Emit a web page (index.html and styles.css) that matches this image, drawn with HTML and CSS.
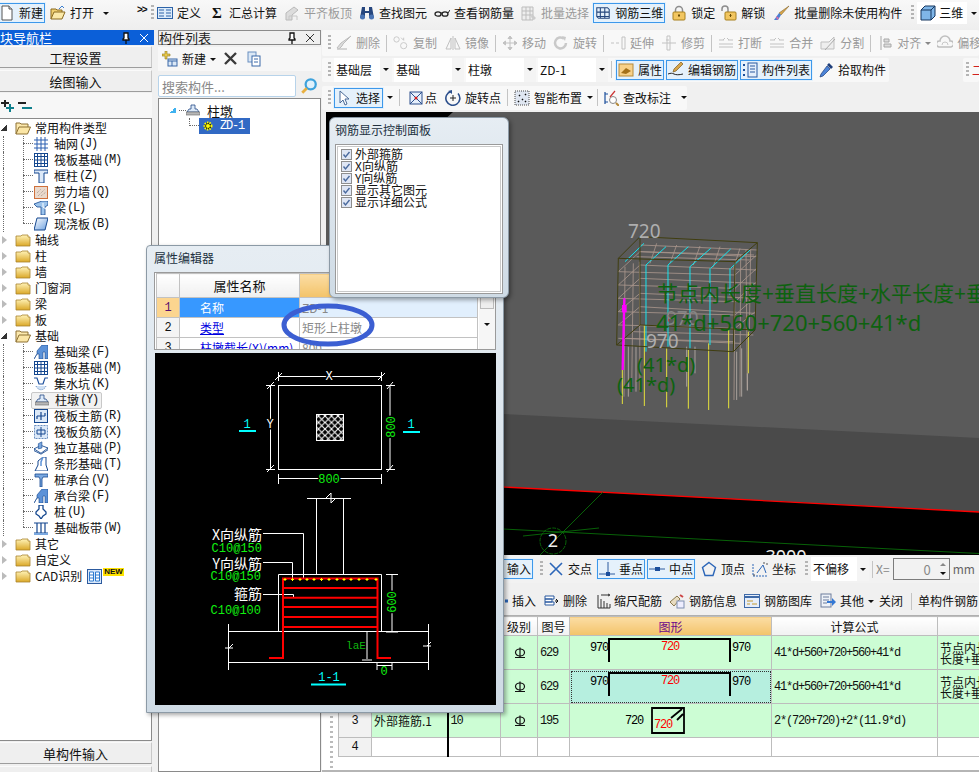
FILE: index.html
```html
<!DOCTYPE html>
<html lang="zh-CN">
<head>
<meta charset="UTF-8">
<title>钢筋三维</title>
<link rel="stylesheet" href="styles.css">
</head>
<body>
<svg class="sprite" xmlns="http://www.w3.org/2000/svg">
  <symbol id="i-doc" viewBox="0 0 16 16"><path d="M3 1h7l3 3v11H3z" fill="#fff" stroke="#555"/><path d="M10 1v3h3" fill="#ddd" stroke="#555"/></symbol>
  <symbol id="i-open" viewBox="0 0 16 16"><path d="M1 14V4h5l1 1h5v3" fill="#f0cf70" stroke="#8a6a20"/><path d="M1 14l3-7h11l-3 7z" fill="#fbe9a8" stroke="#8a6a20"/><path d="M9 4l3-3 2 2" fill="none" stroke="#3c7fd0"/></symbol>
  <symbol id="i-folder" viewBox="0 0 16 14"><path d="M1 3h5l1-1h6v2h2v9H1z" fill="url(#g-fold)" stroke="#a8842e" stroke-width=".8"/></symbol>
  <symbol id="i-folder-open" viewBox="0 0 16 14"><path d="M1 13V2h4l1 1h7v3" fill="#fce9ae" stroke="#8d7033"/><path d="M1 13l3-7h11.500l-3 7z" fill="#fbe6a6" stroke="#8d7033"/></symbol>
  <linearGradient id="g-fold" x1="0" y1="0" x2="0" y2="1"><stop offset="0" stop-color="#fff3b8"/><stop offset="1" stop-color="#dba828"/></linearGradient>
  <symbol id="i-define" viewBox="0 0 16 16"><rect x=".5" y="2.500" width="15" height="11" fill="#dcebfa" stroke="#2d63a8"/><path d="M2 5h5M9 5h5M9 8h5M9 11h5M2 8h5M2 11h5" stroke="#2d63a8"/></symbol>
  <symbol id="i-sum" viewBox="0 0 13 16"><text x="0" y="13" font-family="Liberation Serif" font-size="15" font-weight="700" fill="#111">Σ</text></symbol>
  <symbol id="i-level" viewBox="0 0 16 16"><path d="M2 15V8l8-6 4 3-6 5v5z" fill="#dcdcdc" stroke="#b9b9b9"/><path d="M5 15v-4h8v4" fill="none" stroke="#c6c6c6"/></symbol>
  <symbol id="i-binoc" viewBox="0 0 16 16"><path d="M3 2h3v4h4V2h3l2 11h-5V8H6v5H1z" fill="#26467e"/><circle cx="3.500" cy="12" r="2.500" fill="#4a74b4"/><circle cx="12.500" cy="12" r="2.500" fill="#4a74b4"/></symbol>
  <symbol id="i-glass" viewBox="0 0 16 16"><ellipse cx="4" cy="9" rx="3" ry="2.200" fill="none" stroke="#222" stroke-width="1.300"/><ellipse cx="11" cy="9" rx="3" ry="2.200" fill="none" stroke="#222" stroke-width="1.300"/><path d="M7 8h1M14 8l2-3" stroke="#222"/></symbol>
  <symbol id="i-batch" viewBox="0 0 16 16"><path d="M1 2h11v13H1zM1 6h11M1 10h11M5 2v13M9 2v13" fill="#eee" stroke="#bdbdbd"/><path d="M11 9l4 4-2 2-3-3z" fill="#ccc"/></symbol>
  <symbol id="i-rebar3d" viewBox="0 0 16 18"><path d="M1 3h12l2 2v10H3l-2-2zM1 8h14M5 3v12M10 3v12M1 13h14" fill="none" stroke="#24467c" stroke-width="1.200"/></symbol>
  <symbol id="i-lock" viewBox="0 0 14 16"><path d="M3.500 8V5a3.500 3.500 0 0 1 7 0v3" fill="none" stroke="#8d8d8d" stroke-width="1.500"/><rect x="1" y="7" width="12" height="8" rx="1" fill="#f2c660" stroke="#a8801c"/><path d="M7 9v3M6 10.500h2" stroke="#6a4d05"/></symbol>
  <symbol id="i-unlock" viewBox="0 0 16 16"><path d="M1 6V4a3 3 0 0 1 6 0v3" fill="none" stroke="#8d8d8d" stroke-width="1.500"/><rect x="4" y="7" width="11" height="8" rx="1" fill="#f2c660" stroke="#a8801c"/><path d="M9.500 9v3M8.500 10.500h2" stroke="#6a4d05"/></symbol>
  <symbol id="i-brush" viewBox="0 0 16 16"><path d="M15 1L7 10l-2-2z" fill="#d8a64a" stroke="#86672c" stroke-width=".6"/><path d="M5 8l2 2-3 5H0z" fill="#4a80d4"/><path d="M2 11l3 2-2 2" fill="#e26ca4"/></symbol>
  <symbol id="i-cube" viewBox="0 0 16 16"><path d="M1 5l4-4h10v10l-4 4H1z" fill="#7fb6e8" stroke="#17375f"/><path d="M1 5h10v10M11 5l4-4" fill="none" stroke="#17375f"/></symbol>
  <symbol id="i-erase" viewBox="0 0 16 16"><path d="M15 1L7 9l-1 2-3 3-2-1 4-5z" fill="#dcdcdc" stroke="#bcbcbc"/><path d="M1 14h10" stroke="#c9c9c9" stroke-width="1.500"/></symbol>
  <symbol id="i-copy" viewBox="0 0 18 16"><circle cx="4" cy="4" r="3" fill="none" stroke="#c4c4c4"/><circle cx="12" cy="11" r="3.500" fill="none" stroke="#c4c4c4"/><path d="M9 2l3 3M12 2v3" stroke="#c4c4c4"/></symbol>
  <symbol id="i-mirror" viewBox="0 0 16 16"><path d="M8 1v14M6 3L1 14h5zM10 3l5 11h-5z" fill="none" stroke="#c0c0c0"/></symbol>
  <symbol id="i-move" viewBox="0 0 16 16"><path d="M8 1v14M1 8h14M8 1L6 3.500h4zM8 15l-2-2.500h4zM1 8l2.500-2v4zM15 8l-2.500-2v4z" fill="#c2c2c2" stroke="#c2c2c2"/></symbol>
  <symbol id="i-rotate" viewBox="0 0 16 16"><path d="M13 8a5.500 5.500 0 1 1-2-4.300" fill="none" stroke="#c9c9c9" stroke-width="2.500"/><path d="M9 1l4 1-1 4z" fill="#c9c9c9"/></symbol>
  <symbol id="i-extend" viewBox="0 0 16 16"><path d="M1 8h3M6 8h3" stroke="#c2c2c2"/><path d="M12 2h3v12h-3z" fill="none" stroke="#c2c2c2"/></symbol>
  <symbol id="i-trim" viewBox="0 0 16 16"><path d="M1 8h14M5 5h3M6 1h3v14H6z" fill="none" stroke="#c2c2c2"/></symbol>
  <symbol id="i-break" viewBox="0 0 16 16"><path d="M1 5h5M10 5h5M1 12h14M1 9h14M5 5l2-2M11 5L9 3" fill="none" stroke="#c2c2c2"/></symbol>
  <symbol id="i-split" viewBox="0 0 16 16"><path d="M1 14V7h8l5-5v12z" fill="#eee" stroke="#bfbfbf"/><path d="M5 15l10-11" stroke="#aaa"/></symbol>
  <symbol id="i-align" viewBox="0 0 12 16"><path d="M2 1v14M5 4h5v3H5zM5 9h7v3H5z" fill="#ddd" stroke="#a8a8a8"/></symbol>
  <symbol id="i-offset" viewBox="0 0 16 16"><path d="M2 12a3 3 0 0 1 1-6 5 5 0 0 1 10 0 3 3 0 0 1 1 6z" fill="none" stroke="#bfbfbf" stroke-width="1.500"/><path d="M5 10a3 3 0 0 1 6 0" fill="none" stroke="#c8c8c8"/></symbol>
  <symbol id="i-attr" viewBox="0 0 16 16"><rect x="1" y="2" width="14" height="12" fill="#f8d189" stroke="#b58a3a"/><path d="M3 11l5-5 5 3-5 3z" fill="#a47018"/></symbol>
  <symbol id="i-pencil" viewBox="0 0 16 16"><path d="M15 2l-7 7-3 1 1-3 7-7z" fill="#d8a64a" stroke="#7c5c1e" stroke-width=".7"/><path d="M0 12c3-1 4-1 6 0s5 1 9 0" fill="none" stroke="#222"/></symbol>
  <symbol id="i-list" viewBox="0 0 16 16"><path d="M1 2h2v2H1zM1 7h2v2H1zM1 12h2v2H1z" fill="#1c4f9c"/><rect x="6" y="1" width="9" height="14" fill="#e4eefa" stroke="#28589f"/><path d="M8 4h5M8 7h5M8 10h5" stroke="#28589f"/></symbol>
  <symbol id="i-pick" viewBox="0 0 16 16"><path d="M11 1l4 4-2 2-4-4z" fill="#1f3f7a"/><path d="M9 4l3 3-7 7-3 1 1-3z" fill="#4c84d8" stroke="#1f3f7a" stroke-width=".7"/></symbol>
  <symbol id="i-cursor" viewBox="0 0 12 16"><path d="M2 1v12l3-3 2 5 2-1-2-5h4z" fill="#fff" stroke="#4b6b98"/></symbol>
  <symbol id="i-point" viewBox="0 0 16 16"><rect x="2" y="2" width="12" height="12" fill="#e6effb" stroke="#2c4f8c"/><path d="M2 2l12 12M14 2L2 14" stroke="#2c4f8c"/><circle cx="8" cy="8" r="1.500" fill="#d02020"/></symbol>
  <symbol id="i-rotpt" viewBox="0 0 16 16"><path d="M13 3.500A7 7 0 1 1 6 1.500" fill="none" stroke="#2c4f8c" stroke-width="1.600"/><path d="M3 1l4-1v4z" fill="#2c4f8c"/><path d="M8 5v6M5 8h6" stroke="#222"/></symbol>
  <symbol id="i-smart" viewBox="0 0 16 16"><rect x="1" y="1" width="14" height="14" fill="#dfe6f1" stroke="#4a4a4a" stroke-dasharray="1 1"/><path d="M5 5l1 1M11 4l1 1M8 9l1 1M4 11l1 1M11 11l1 1" stroke="#111" stroke-width="1.500"/></symbol>
  <symbol id="i-query" viewBox="0 0 16 16"><path d="M2 2v12M2 4h3M2 12h3" stroke="#1c4f9c" stroke-width="1.200"/><circle cx="10" cy="10" r="3.500" fill="#fff" stroke="#888"/><path d="M13 13l3 3" stroke="#b58a3a" stroke-width="2"/><path d="M7 7l5-6" stroke="#c33" stroke-width="1.200"/></symbol>
  <symbol id="i-cross" viewBox="0 0 16 16"><path d="M2 2l12 12M14 2L2 14" stroke="#2c66b8" stroke-width="1.600"/></symbol>
  <symbol id="i-perp" viewBox="0 0 16 16"><path d="M0 13h16M9 1v12" stroke="#2c5a9e"/><rect x="7" y="11" width="4" height="4" fill="#1c4f9c"/></symbol>
  <symbol id="i-mid" viewBox="0 0 16 16"><path d="M0 8h16" stroke="#2c5a9e"/><rect x="6" y="6" width="5" height="4" fill="#1c4f9c"/></symbol>
  <symbol id="i-vertex" viewBox="0 0 16 16"><path d="M8 1.500l6.500 5-2.500 8H4l-2.500-8z" fill="none" stroke="#2c66b8" stroke-width="1.400"/></symbol>
  <symbol id="i-coord" viewBox="0 0 16 16"><path d="M1 3v12h14" fill="none" stroke="#2c66b8" stroke-dasharray="2 1"/><path d="M5 12l6-8 3 8" fill="none" stroke="#2c66b8"/><path d="M11 2h2M1 14h2M14 3h2" stroke="#555"/></symbol>
  <symbol id="i-insert" viewBox="0 0 16 16"><path d="M13 8h3" stroke="#2c66b8" stroke-width="3"/></symbol>
  <symbol id="i-del" viewBox="0 0 16 16"><path d="M2 3h9v3H2zM2 6h7v3H2zM2 9h9v3H2z" fill="#fff" stroke="#28589f"/><path d="M12 8h3M13 6l2 2-2 2" fill="none" stroke="#111"/></symbol>
  <symbol id="i-shrink" viewBox="0 0 14 16"><path d="M1 2v13M1 15h12M4 6v9M7 8v7M10 10v5M13 11v4M4 2h8M11 1l2 1-2 1" fill="none" stroke="#333"/></symbol>
  <symbol id="i-info" viewBox="0 0 16 16"><path d="M1 9l7-6 3 3-6 7z" fill="#e8dcc0" stroke="#8a7a50"/><rect x="8" y="8" width="7" height="7" fill="#eef" stroke="#7f8fb0"/><path d="M11 2l3 2" stroke="#c44" stroke-width="2"/></symbol>
  <symbol id="i-lib" viewBox="0 0 16 16"><rect x=".5" y="1.500" width="15" height="13" fill="#e6eefa" stroke="#3f6aa8"/><path d="M1 4h14" stroke="#3f6aa8" stroke-width="2"/><path d="M3 8h6M3 11h3M8 11h5" stroke="#c49a30"/></symbol>
  <symbol id="i-other" viewBox="0 0 16 16"><rect x="1" y="1" width="10" height="13" fill="#eef2f8" stroke="#6c7d9c"/><path d="M3 4h6M3 7h6M3 10h4" stroke="#6c7d9c"/><path d="M7 8h5V5l4 4-4 4v-3H7z" fill="#3478d4"/></symbol>
  <symbol id="i-new" viewBox="0 0 16 16"><path d="M3 0h2v3h3v2H5v3H3V5H0V3h3z" fill="#e8c84a" stroke="#8f7a20" stroke-width=".6"/><rect x="6" y="8" width="9" height="7" fill="#dbe8f6" stroke="#3a69a8"/><path d="M6 10h9M10 10v5" stroke="#3a69a8"/></symbol>
  <symbol id="i-x" viewBox="0 0 16 16"><path d="M2 2l11 11M13 2L2 13" stroke="#3a3a3a" stroke-width="2.400"/></symbol>
  <symbol id="i-paste" viewBox="0 0 16 16"><rect x="2" y="1" width="8" height="10" fill="#dbe8f6" stroke="#6a8fc0"/><rect x="6" y="5" width="8" height="10" fill="#fff" stroke="#3a69a8"/><path d="M8 8h4M8 11h4" stroke="#3a69a8"/></symbol>
  <symbol id="i-search" viewBox="0 0 16 16"><circle cx="9.500" cy="6.500" r="4.500" fill="#dff1fc" stroke="#3da2dc" stroke-width="2"/><path d="M6 10l-4 4" stroke="#e8b040" stroke-width="2.500"/></symbol>
  <symbol id="i-pin" viewBox="0 0 10 12"><path d="M3 1h4v5l1 1v1H2V7l1-1zM5 8v4" fill="#fff" stroke="#111" stroke-width="1.300"/></symbol>
  <symbol id="i-close" viewBox="0 0 10 10"><path d="M1 1l8 8M9 1L1 9" stroke="currentColor"/></symbol>
  <symbol id="i-plus" viewBox="0 0 14 14"><path d="M5 1v7M1 4h8" stroke="#222" stroke-width="2"/><path d="M10 5v8M6 9h8" stroke="#0f7f8c" stroke-width="2"/></symbol>
  <symbol id="i-minus" viewBox="0 0 14 14"><path d="M0 4h8" stroke="#222" stroke-width="2"/><path d="M4 9h10" stroke="#0f7f8c" stroke-width="2"/></symbol>
  <symbol id="i-grade" viewBox="0 0 12 12"><ellipse cx="6" cy="5.500" rx="4.500" ry="3.500" fill="none" stroke="#111" stroke-width="1.200"/><path d="M6 .5v10M1 10.500h10" stroke="#111" stroke-width="1.200"/></symbol>
  <symbol id="t-grid" viewBox="0 0 14 14"><path d="M0 3h14M0 7h14M0 11h14M3 0v14M7 0v14M11 0v14" stroke="#2a5fb0"/></symbol>
  <symbol id="t-raft" viewBox="0 0 14 14"><rect x=".5" y=".5" width="13" height="13" fill="#fff" stroke="#14478f"/><path d="M0 3.500h14M0 10.500h14M3.500 0v14M10.500 0v14M0 7h14M7 0v14" stroke="#14478f"/></symbol>
  <symbol id="t-col" viewBox="0 0 14 14"><path d="M0 1h14v3H10v10H5V4H0z" fill="#dce9f8" stroke="#14478f"/></symbol>
  <symbol id="t-wall" viewBox="0 0 14 14"><rect x=".5" y="1.500" width="13" height="12" fill="#ead9cc" stroke="#d0703a"/><path d="M4 11l7-7M3 8l4-4M7 11l5-4" stroke="#a89a90" stroke-dasharray="1 1"/></symbol>
  <symbol id="t-beam" viewBox="0 0 14 14"><path d="M0 3l8-3h6v4l-3 2v8H7V6H3z" fill="#9cc4ec" stroke="#14478f" stroke-width=".8"/><path d="M9 2v4l3 2" fill="none" stroke="#fff"/></symbol>
  <symbol id="t-slab" viewBox="0 0 14 14"><path d="M3 1h11l-3 12H0z" fill="url(#g-slab)" stroke="#14478f"/></symbol>
  <linearGradient id="g-slab" x1="0" y1="0" x2="1" y2="1"><stop offset="0" stop-color="#fff"/><stop offset="1" stop-color="#6ca0e0"/></linearGradient>
  <symbol id="t-fbeam" viewBox="0 0 14 14"><path d="M0 14l3-5V6l5-6h6v14h-3V7L9 7v7H5V9H3z" fill="#5c92d8" stroke="#14478f" stroke-width=".6"/></symbol>
  <symbol id="t-pit" viewBox="0 0 14 14"><path d="M0 1h3l2 6h4l2-6h3" fill="none" stroke="#1c4f9c" stroke-width="1.200"/><path d="M2 9c2 5 8 5 10 0" fill="#cfe0f4" stroke="#6a8fc0" stroke-dasharray="1 1"/></symbol>
  <symbol id="t-pier" viewBox="0 0 14 14"><path d="M5 2h4v4h2l2 3H1l2-3h2z" fill="#dce9f8" stroke="#234a86" stroke-width=".8"/><rect x="0" y="9" width="14" height="3" fill="#b7b7b7" stroke="#666" stroke-width=".6"/></symbol>
  <symbol id="t-main" viewBox="0 0 14 14"><rect x=".5" y=".5" width="13" height="13" fill="#dce9f8" stroke="#14478f"/><path d="M7 3v8M3 7h8M3 7v3M11 7v-3" fill="none" stroke="#14478f" stroke-width="1.200"/></symbol>
  <symbol id="t-neg" viewBox="0 0 14 14"><rect x=".5" y=".5" width="13" height="13" fill="#dce9f8" stroke="#6a8fc0" stroke-dasharray="2 1"/><path d="M7 2v10M3 5h8M3 9h8M3 5v4M11 5v4" fill="none" stroke="#14478f"/></symbol>
  <symbol id="t-iso" viewBox="0 0 16 14"><path d="M0 8l8-4 8 3-8 6z" fill="#fff" stroke="#14478f"/><path d="M5 2l4-2v7l-4 1z" fill="#7aa8e0" stroke="#14478f" stroke-width=".7"/><path d="M0 8v2l8 4 8-5V7" fill="none" stroke="#14478f"/></symbol>
  <symbol id="t-strip" viewBox="0 0 14 14"><path d="M1 14l3-6V4l5-4h3v8l2 6z" fill="#fff" stroke="#14478f"/><path d="M9 0l-2 5v4" fill="none" stroke="#5c92d8" stroke-width="1.500"/></symbol>
  <symbol id="t-cap" viewBox="0 0 14 14"><path d="M1 1h13v3H9l-1 2v8H6V6L5 4H1z" fill="#7aa8e0" stroke="#14478f" stroke-width=".8"/></symbol>
  <symbol id="t-pile" viewBox="0 0 14 14"><path d="M5 0h4v4l3 3v2l-3 2-2 3-2-3-3-2V7l3-3z" fill="#fff" stroke="#14478f" stroke-width="1.300"/></symbol>
  <symbol id="t-band" viewBox="0 0 14 14"><path d="M0 2h14M0 12h14M3 2v10M7 2v10M11 2v10" stroke="#14478f" stroke-width="1.200"/><path d="M0 13h14" stroke="#7aa8e0" stroke-width="2"/></symbol>
  <symbol id="i-check" viewBox="0 0 11 11"><rect x=".5" y=".5" width="10" height="10" fill="#dfe6f4" stroke="#8e8e8e"/><path d="M2.500 5.500l2 2.500 4-5" fill="none" stroke="#4a6a9e" stroke-width="1.400"/></symbol>
</svg>

<div class="app">
  <header class="topbar">
    <div class="tool on first"><svg class="ico"><use href="#i-doc"/></svg>新建</div>
    <div class="tool m1"><svg class="ico"><use href="#i-open"/></svg>打开</div>
    <span class="caret m6"></span>
    <span class="chev">&gt;&gt;</span>
    <span class="grip gripm"></span>
    <div class="tool"><svg class="ico"><use href="#i-define"/></svg>定义</div>
    <div class="tool m5"><svg class="ico sum"><use href="#i-sum"/></svg>汇总计算</div>
    <div class="tool off m1"><svg class="ico"><use href="#i-level"/></svg>平齐板顶</div>
    <div class="tool m1"><svg class="ico"><use href="#i-binoc"/></svg>查找图元</div>
    <div class="tool m1"><svg class="ico"><use href="#i-glass"/></svg>查看钢筋量</div>
    <div class="tool off m1"><svg class="ico"><use href="#i-batch"/></svg>批量选择</div>
    <div class="tool on"><svg class="ico"><use href="#i-rebar3d"/></svg>钢筋三维</div>
    <div class="tool m2"><svg class="ico"><use href="#i-lock"/></svg>锁定</div>
    <div class="tool"><svg class="ico"><use href="#i-unlock"/></svg>解锁</div>
    <div class="tool m3"><svg class="ico"><use href="#i-brush"/></svg>批量删除未使用构件</div>
    <span class="grip gripw"></span>
    <div class="combo view"><svg class="ico"><use href="#i-cube"/></svg>三维</div>
    <span class="caret m4"></span>
  </header>

  <div class="main">
    <aside class="nav">
      <div class="pane-title active"><span>块导航栏</span><svg class="pin"><use href="#i-pin"/></svg><svg class="closex"><use href="#i-close"/></svg></div>
      <div class="nav-btn">工程设置</div>
      <div class="nav-btn">绘图输入</div>
      <div class="nav-tools"><svg class="ico14"><use href="#i-plus"/></svg><svg class="ico14"><use href="#i-minus"/></svg></div>
      <div class="tree">
        <div class="folder"><span class="exp open"></span><svg class="fold"><use href="#i-folder-open"/></svg>常用构件类型</div>
        <div class="kid"><span class="stub"></span><svg class="ti"><use href="#t-grid"/></svg>轴网<em>(J)</em></div>
        <div class="kid"><span class="stub"></span><svg class="ti"><use href="#t-raft"/></svg>筏板基础<em>(M)</em></div>
        <div class="kid"><span class="stub"></span><svg class="ti"><use href="#t-col"/></svg>框柱<em>(Z)</em></div>
        <div class="kid"><span class="stub"></span><svg class="ti"><use href="#t-wall"/></svg>剪力墙<em>(Q)</em></div>
        <div class="kid"><span class="stub"></span><svg class="ti"><use href="#t-beam"/></svg>梁<em>(L)</em></div>
        <div class="kid end"><span class="stub"></span><svg class="ti"><use href="#t-slab"/></svg>现浇板<em>(B)</em></div>
        <div class="folder"><span class="exp"></span><svg class="fold"><use href="#i-folder"/></svg>轴线</div>
        <div class="folder"><span class="exp"></span><svg class="fold"><use href="#i-folder"/></svg>柱</div>
        <div class="folder"><span class="exp"></span><svg class="fold"><use href="#i-folder"/></svg>墙</div>
        <div class="folder"><span class="exp"></span><svg class="fold"><use href="#i-folder"/></svg>门窗洞</div>
        <div class="folder"><span class="exp"></span><svg class="fold"><use href="#i-folder"/></svg>梁</div>
        <div class="folder"><span class="exp"></span><svg class="fold"><use href="#i-folder"/></svg>板</div>
        <div class="folder"><span class="exp open"></span><svg class="fold"><use href="#i-folder-open"/></svg>基础</div>
        <div class="kid"><span class="stub"></span><svg class="ti"><use href="#t-fbeam"/></svg>基础梁<em>(F)</em></div>
        <div class="kid"><span class="stub"></span><svg class="ti"><use href="#t-raft"/></svg>筏板基础<em>(M)</em></div>
        <div class="kid"><span class="stub"></span><svg class="ti"><use href="#t-pit"/></svg>集水坑<em>(K)</em></div>
        <div class="kid"><span class="stub"></span><span class="hover"><svg class="ti"><use href="#t-pier"/></svg>柱墩<em>(Y)</em></span></div>
        <div class="kid"><span class="stub"></span><svg class="ti"><use href="#t-main"/></svg>筏板主筋<em>(R)</em></div>
        <div class="kid"><span class="stub"></span><svg class="ti"><use href="#t-neg"/></svg>筏板负筋<em>(X)</em></div>
        <div class="kid"><span class="stub"></span><svg class="ti"><use href="#t-iso"/></svg>独立基础<em>(P)</em></div>
        <div class="kid"><span class="stub"></span><svg class="ti"><use href="#t-strip"/></svg>条形基础<em>(T)</em></div>
        <div class="kid"><span class="stub"></span><svg class="ti"><use href="#t-cap"/></svg>桩承台<em>(V)</em></div>
        <div class="kid"><span class="stub"></span><svg class="ti"><use href="#t-fbeam"/></svg>承台梁<em>(F)</em></div>
        <div class="kid"><span class="stub"></span><svg class="ti"><use href="#t-pile"/></svg>桩<em>(U)</em></div>
        <div class="kid end"><span class="stub"></span><svg class="ti"><use href="#t-band"/></svg>基础板带<em>(W)</em></div>
        <div class="folder"><span class="exp"></span><svg class="fold"><use href="#i-folder"/></svg>其它</div>
        <div class="folder"><span class="exp"></span><svg class="fold"><use href="#i-folder"/></svg>自定义</div>
        <div class="folder"><span class="exp"></span><svg class="fold"><use href="#i-folder"/></svg><span class="cad-name">CAD识别</span>
          <svg class="cad-ico" viewBox="0 0 15 15"><rect x=".5" y=".5" width="14" height="14" fill="#d9e8fa" stroke="#2c5a9e"/><path d="M2.500 3h4v9h-4zM8.500 3h4v9h-4zM2.500 6h4M2.500 9h4M8.500 6h4M8.500 9h4" fill="#fff" stroke="#2c7bd0"/></svg><span class="newtag">NEW</span></div>
      </div>
      <div class="nav-btn">单构件输入</div>
      <div class="nav-btn">报表预览</div>
    </aside>

    <section class="list-pane">
      <div class="pane-title"><span>构件列表</span><svg class="pin"><use href="#i-pin"/></svg><svg class="closex"><use href="#i-close"/></svg></div>
      <div class="list-tools">
        <svg class="ico"><use href="#i-new"/></svg><span>新建</span><span class="caret"></span>
        <svg class="ico del"><use href="#i-x"/></svg><svg class="ico"><use href="#i-paste"/></svg>
      </div>
      <div class="search"><span class="search-box">搜索构件...</span><svg class="ico18"><use href="#i-search"/></svg></div>
      <div class="list-tree">
        <div class="root"><span class="exp-blue"></span><span class="hdash"></span><svg class="ti"><use href="#t-pier"/></svg>柱墩</div>
        <div class="leaf"><span class="stub"></span><span class="picked"><svg class="gear" viewBox="0 0 12 12"><circle cx="6" cy="6" r="3.500" fill="#111" stroke="#ff0" stroke-width="2" stroke-dasharray="1.500 1"/><circle cx="6" cy="6" r="2" fill="#ff0"/></svg><i>ZD-1</i></span></div>
      </div>
    </section>

    <section class="work">
      <div class="tb wide">
        <span class="grip"></span>
        <div class="tool off m2"><svg class="ico"><use href="#i-erase"/></svg>删除</div><span class="sep"></span>
        <div class="tool off"><svg class="ico"><use href="#i-copy"/></svg>复制</div>
        <div class="tool off m2"><svg class="ico"><use href="#i-mirror"/></svg>镜像</div><span class="sep"></span>
        <div class="tool off"><svg class="ico"><use href="#i-move"/></svg>移动</div>
        <div class="tool off m1"><svg class="ico"><use href="#i-rotate"/></svg>旋转</div><span class="sep"></span>
        <div class="tool off"><svg class="ico"><use href="#i-extend"/></svg>延伸</div>
        <div class="tool off m1"><svg class="ico"><use href="#i-trim"/></svg>修剪</div><span class="sep"></span>
        <div class="tool off"><svg class="ico"><use href="#i-break"/></svg>打断</div>
        <div class="tool off m1"><svg class="ico"><use href="#i-break"/></svg>合并</div>
        <div class="tool off m1"><svg class="ico"><use href="#i-split"/></svg>分割</div><span class="sep"></span>
        <div class="tool off"><svg class="ico"><use href="#i-align"/></svg>对齐</div><span class="caret gray"></span>
        <div class="tool off m3"><svg class="ico"><use href="#i-offset"/></svg>偏移</div>
      </div>

      <div class="tb-row">
        <div class="tb">
          <span class="grip"></span>
          <div class="combo w58 m2">基础层<b><span class="caret"></span></b></div>
          <div class="combo w70 m2">基础<b><span class="caret"></span></b></div>
          <div class="combo w70 m2">柱墩<b><span class="caret"></span></b></div>
          <div class="combo w70 m2">ZD-1<b><span class="caret"></span></b></div>
          <span class="sep"></span>
          <div class="tool on"><svg class="ico"><use href="#i-attr"/></svg>属性</div>
          <div class="tool on"><svg class="ico"><use href="#i-pencil"/></svg>编辑钢筋</div>
          <div class="tool on"><svg class="ico"><use href="#i-list"/></svg>构件列表</div>
          <div class="tool m2"><svg class="ico"><use href="#i-pick"/></svg>拾取构件</div>
        </div>
        <div class="tb tail"><span class="grip"></span><span class="red-frag">二</span></div>
      </div>

      <div class="tb-row last">
        <div class="tb">
          <span class="grip"></span>
          <div class="tool on sel"><svg class="ico12"><use href="#i-cursor"/></svg>选择</div><span class="caret m3"></span><span class="sep w8"></span>
          <div class="tool tight"><svg class="ico"><use href="#i-point"/></svg>点</div>
          <div class="tool m2"><svg class="ico"><use href="#i-rotpt"/></svg>旋转点</div><span class="sep"></span>
          <div class="tool"><svg class="ico"><use href="#i-smart"/></svg>智能布置</div><span class="caret m2"></span><span class="sep w7"></span>
          <div class="tool"><svg class="ico"><use href="#i-query"/></svg>查改标注</div><span class="caret m3 e6"></span>
        </div>
      </div>

      <svg class="viewport" viewBox="326 112 653 443">
        <rect x="326" y="112" width="653" height="443" fill="#5a5a5a"/>
        <path d="M503 414L979 438V512L503 487z" fill="#4a4a4a"/>
        <path d="M326 112H453L400 160H326z" fill="#000"/>
        <path d="M326 440L503 487 979 512V555H326z" fill="#000"/>
        <path d="M503 487L979 512" stroke="#f00" stroke-width="1.300"/>
        <g fill="none" stroke="#0a7a0a" stroke-width=".8">
          <path d="M503 529L979 553.500M523 536L599 528M603 492L540 555"/>
          <circle cx="553" cy="541" r="13" stroke-dasharray="4 1"/>
        </g>
        <text class="g-mark" x="553" y="547" text-anchor="middle">2</text>
        <text class="g-mark" x="786" y="563" text-anchor="middle">3000</text>

        <g transform="translate(500 200) scale(.33333)" fill="none">
          <g stroke="#a8958c" stroke-width="2.500">
            <path d="M375 200L372 590M400 190L395 575M418 185L420 570M705 190L702 600M722 165L720 590M738 150L742 570M752 150L748 395"/>
            <path d="M355 215L705 225M355 255L705 265M355 295L705 305M355 335L705 345M355 375L705 385M355 415L705 425"/>
            <path d="M420 135L772 150M418 155L762 165M410 170L750 180M400 395L760 405M380 415L720 430"/>
            <path d="M705 225L770 165M705 265L770 205M705 305L770 245M705 345L768 290M705 385L766 335M355 215L420 155M355 255L420 195M355 295L420 235M355 335L420 280M355 375L420 320"/>
            <path d="M470 130L450 190M530 135L510 190M600 138L580 195M660 140L640 200M720 145L700 205M770 170L420 155M768 210L420 195M768 250L420 235M766 295L420 280M764 340L420 320"/>
          </g>
          <g stroke="#e6e23c" stroke-width="3">
            <path d="M367 510V612M433 375V618M500 445V622M565 450V626M626 430V630M686 390V625M745 395V520"/>
          </g>
          <g stroke="#b9b0a8" stroke-width="2.500">
            <path d="M385 440V590M408 440V575M560 440V560M585 440V520M710 455V600M725 445V590M742 520V572"/>
          </g>
          <g stroke="#12e6f0" stroke-width="3">
            <path d="M438 195V455M504 195V440M570 200V445M630 205V435M690 205V285"/>
            <path d="M375 185L432 130M438 195L498 140M504 195L565 140M570 200L632 145M632 205L692 147M692 205L750 150"/>
          </g>
          <path d="M355 175L420 110 772 128 705 185zM355 175L350 435 700 455 705 185M772 128L765 390 700 455M350 435L420 375 765 390M420 110L420 375" stroke="#3f3d0f" stroke-width="3"/>
          <path d="M373 295L368 510" stroke="#ff00ff" stroke-width="7"/>
          <path d="M373 315v22" stroke="#ff00ff" stroke-width="14"/>
          <path d="M505 345v20M500 400v12" stroke="#d04040" stroke-width="3"/>
        </g>
        <text class="v-gray" x="628" y="238">720</text>
        <text class="v-gray dim" x="666" y="325">970</text>
        <text class="v-gray" x="646" y="348">970</text>
        <text class="v-green" x="657" y="301">节点内长度+垂直长度+水平长度+垂直长度</text>
        <text class="v-green num" x="656" y="331">41*d+560+720+560+41*d</text>
        <text class="v-green sm" x="637" y="372">(41*d)</text>
        <text class="v-green sm" x="617" y="392">(41*d)</text>
      </svg>

      <div class="tb-stack">
        <div class="tb strip">
          <div class="tool on stub-btn">输入</div>
          <span class="grip m6"></span>
          <div class="tool m3"><svg class="ico"><use href="#i-cross"/></svg>交点</div>
          <div class="tool on m1"><svg class="ico"><use href="#i-perp"/></svg>垂点</div>
          <div class="tool on"><svg class="ico"><use href="#i-mid"/></svg>中点</div>
          <div class="tool m2"><svg class="ico"><use href="#i-vertex"/></svg>顶点</div>
          <div class="tool m1"><svg class="ico"><use href="#i-coord"/></svg>坐标</div>
          <span class="grip m6"></span>
          <div class="combo w58 m2">不偏移<b><span class="caret"></span></b></div>
          <span class="sep"></span>
          <span class="xlabel">X=</span>
          <span class="num-input">0<span class="spin"><span class="caret up"></span><span class="caret"></span></span></span>
          <span class="mm">mm</span>
        </div>
        <div class="tb strip second">
          <div class="tool"><svg class="ico"><use href="#i-insert"/></svg>插入</div>
          <div class="tool m1"><svg class="ico"><use href="#i-del"/></svg>删除</div>
          <div class="tool m3 shrink"><svg class="ico12"><use href="#i-shrink"/></svg>缩尺配筋</div>
          <div class="tool m1"><svg class="ico"><use href="#i-info"/></svg>钢筋信息</div>
          <div class="tool m1"><svg class="ico"><use href="#i-lib"/></svg>钢筋图库</div>
          <div class="tool m2"><svg class="ico"><use href="#i-other"/></svg>其他</div><span class="caret m1"></span>
          <span class="plain close-txt">关闭</span><span class="sep wide-left"></span>
          <span class="plain">单构件钢筋</span>
        </div>
      </div>

      <div class="grid-wrap">
        <span class="grip side"></span>
        <table class="rebar">
          <colgroup><col class="c1"><col class="c2"><col class="c3"><col class="c4"><col class="c5"><col class="c6"><col class="c7"><col class="c8"></colgroup>
          <tr class="head"><th></th><th>筋号</th><th>直径(mm)</th><th>级别</th><th>图号</th><th class="hot">图形</th><th>计算公式</th><th></th></tr>
          <tr class="fill">
            <th>1</th><td>X向纵筋.1</td><td class="bar">25</td><td class="mid"><svg class="grade"><use href="#i-grade"/></svg></td><td class="latin">629</td>
            <td class="shape"><svg viewBox="0 0 200 33"><path d="M39 26V3H160V26" class="sh-line"/><text class="sh-k" x="20" y="15">970</text><text class="sh-k" x="162" y="15">970</text><text class="sh-r" x="100" y="14" text-anchor="middle">720</text></svg></td>
            <td class="latin">41*d+560+720+560+41*d</td><td class="desc">节点内长度+垂直<br>长度+垂直长度</td>
          </tr>
          <tr class="fill">
            <th>2</th><td>Y向纵筋.1</td><td class="bar">25</td><td class="mid"><svg class="grade"><use href="#i-grade"/></svg></td><td class="latin">629</td>
            <td class="shape focus"><svg viewBox="0 0 200 33"><path d="M39 26V3H160V26" class="sh-line"/><text class="sh-k" x="20" y="15">970</text><text class="sh-k" x="162" y="15">970</text><text class="sh-r" x="100" y="14" text-anchor="middle">720</text></svg></td>
            <td class="latin">41*d+560+720+560+41*d</td><td class="desc">节点内长度+垂直<br>长度+垂直长度</td>
          </tr>
          <tr class="fill">
            <th>3</th><td class="name">外部箍筋.1</td><td class="bar">10</td><td class="mid"><svg class="grade"><use href="#i-grade"/></svg></td><td class="latin">195</td>
            <td class="shape"><svg viewBox="0 0 200 33"><path d="M82 4H114V29H82zM101 14L112 5M107 16L113 10" class="sh-line thin"/><text class="sh-k" x="55" y="20">720</text><text class="sh-r" x="84" y="24">720</text></svg></td>
            <td class="latin">2*(720+720)+2*(11.9*d)</td><td></td>
          </tr>
          <tr class="blank"><th>4</th><td></td><td class="bar"></td><td></td><td></td><td></td><td></td><td></td></tr>
        </table>
      </div>
    </section>
  </div>

  <div class="dialog prop">
    <h4 class="dlg-title">属性编辑器</h4>
    <div class="prop-grid">
      <table>
        <tr class="head"><th class="n"></th><th class="k">属性名称</th><th class="hot">属性值</th></tr>
        <tr class="cur"><th class="n">1</th><td class="k">名称</td><td>ZD-1</td></tr>
        <tr><th class="n">2</th><td class="k">类型</td><td>矩形上柱墩</td></tr>
        <tr><th class="n">3</th><td class="k">柱墩截长(X)(mm)</td><td>800</td></tr>
      </table>
      <div class="vscroll"><span class="thumb"></span><span class="caret"></span></div>
    </div>
    <svg class="cad" viewBox="155 353 341 352">
      <rect x="155" y="353" width="341" height="352" fill="#000"/>
      <defs><pattern id="hatch" width="6.500" height="6.500" patternUnits="userSpaceOnUse"><path d="M0 0L6.500 6.500M6.500 0L0 6.500" stroke="#fff" stroke-width="1.100"/></pattern></defs>
      <g fill="none" stroke="#fff" stroke-width="1">
        <rect x="278.500" y="385.500" width="103" height="84"/>
        <rect x="316.500" y="414.500" width="27" height="26" fill="url(#hatch)"/>
        <path d="M278.500 376.500H381.500M278.500 372V381M381.500 372V381M275 380L282 373M378 380L385 373"/>
        <path d="M270.500 385V469M266 385.500H275M266 469.500H275M267 389L274 382M267 472L274 465"/>
        <path d="M390 385V469M386 385.500H395M386 469.500H395M387 389L393 382M387 472L393 465"/>
        <path d="M278.500 478.500H381.500M278.500 474V484M381.500 474V484"/>
        <path d="M316.500 498V574.500M343.500 498V574.500M307 498.500H351M326 498L331 493 331 503 336 498"/>
        <path d="M278.500 574.500H381.500M278.500 574.500V631.500M381.500 574.500V631.500M228 631.500H428M228 662.500H428M228.500 624V670M428.500 624V670"/>
        <path d="M263 533.500H303.500V578M263 562.500H292.500V578M263 594.500H293.500V598"/>
        <path d="M392 574V632M386 574.500H398M386 632H398M367 632V659M362 660H372M377 665.500H392M377 662V670M392 662V670"/>
        <path d="M225 648H233M229 648L233 644M423 646H431M427 646L431 642"/>
      </g>
      <g fill="none" stroke="#f00" stroke-width="2">
        <path d="M269 658H283V578.500H377.500V658H391"/>
        <path d="M283 588H377M283 597.700H377M283 607H377M283 617H377M283 627H377"/>
      </g>
      <g fill="#ff0"><path d="M283.500 579h3v1h-3zM291 579h3v1h-3zM298.500 579h3v1h-3zM305.500 579h3v1h-3zM312.500 579h3v1h-3zM320 579h3v1h-3zM327.500 579h3v1h-3zM335.500 579h3v1h-3zM342.500 579h3v1h-3zM349.500 579h3v1h-3zM357.500 579h3v1h-3zM365.500 579h3v1h-3zM374.500 579h3v1h-3z"/>
      <path d="M284.500 578h1v3h-1zM292 578h1v3h-1zM299.500 578h1v3h-1zM306.500 578h1v3h-1zM313.500 578h1v3h-1zM321 578h1v3h-1zM328.500 578h1v3h-1zM336.500 578h1v3h-1zM343.500 578h1v3h-1zM350.500 578h1v3h-1zM358.500 578h1v3h-1zM366.500 578h1v3h-1zM375.500 578h1v3h-1z"/></g>
      <g stroke="#00ffff" stroke-width="2"><path d="M239 431H256M403 432H420M311 684.500H346"/></g>
      <text class="c-w mono bgk" x="329" y="380" text-anchor="middle">X</text>
      <text class="c-w mono bgk" x="270" y="428" text-anchor="middle">Y</text>
      <text class="c-c mono" x="247" y="428" text-anchor="middle">1</text>
      <text class="c-c mono" x="411" y="428" text-anchor="middle">1</text>
      <text class="c-g mono bgk" transform="translate(395 427) rotate(-90)" text-anchor="middle">800</text>
      <text class="c-g mono bgk" x="329" y="483" text-anchor="middle">800</text>
      <text class="c-w" x="262" y="540" text-anchor="end">X向纵筋</text>
      <text class="c-g mono" x="262" y="552" text-anchor="end">C10@150</text>
      <text class="c-w" x="262" y="569" text-anchor="end">Y向纵筋</text>
      <text class="c-g mono" x="261" y="580" text-anchor="end">C10@150</text>
      <text class="c-w" x="262" y="599" text-anchor="end">箍筋</text>
      <text class="c-g mono" x="261" y="614" text-anchor="end">C10@100</text>
      <text class="c-g mono bgk" transform="translate(396 602) rotate(-90)" text-anchor="middle">600</text>
      <text class="c-g small" x="356" y="649" text-anchor="middle">laE</text>
      <text class="c-g mono" x="384" y="675" text-anchor="middle">0</text>
      <text class="c-c mono" x="329" y="681" text-anchor="middle">1-1</text>
    </svg>
    <svg class="ellipse" viewBox="0 0 100 46"><ellipse cx="50" cy="23" rx="44" ry="19" fill="none" stroke="#3c5fd2" stroke-width="5"/></svg>
  </div>

  <div class="dialog panel">
    <h4 class="dlg-title">钢筋显示控制面板</h4>
    <ul class="checks">
      <li><svg class="chk"><use href="#i-check"/></svg>外部箍筋</li>
      <li><svg class="chk"><use href="#i-check"/></svg>X向纵筋</li>
      <li><svg class="chk"><use href="#i-check"/></svg>Y向纵筋</li>
      <li><svg class="chk"><use href="#i-check"/></svg>显示其它图元</li>
      <li><svg class="chk"><use href="#i-check"/></svg>显示详细公式</li>
    </ul>
  </div>
</div>
</body>
</html>
```

FILE: styles.css
```css
html,body,div,ul,li,h4,table{
    margin:0;
    padding:0;
}
ul,li{list-style:none;}
body{
    font:12px/1 "Noto Sans CJK SC","Liberation Sans",sans-serif;
    color:#111;
    background:#f0f0f0;
}
.sprite{width:0;height:0;position:absolute;}
.app{
    width:979px;
    height:772px;
    position:relative;
    overflow:hidden;
    background:#f0f0f0;
}

/* shared toolbar bits */
.ico{width:16px;height:16px;flex:none;}
.ico12{width:16px;height:16px;flex:none;}
.ico14{width:14px;height:14px;}
.ico18{width:18px;height:18px;}
.tool{
    display:flex;
    align-items:center;
    gap:4px;
    height:22px;
    padding:0 3px;
    flex:none;
    white-space:nowrap;
    box-sizing:border-box;
}
.tool.on{
    background:#e5f1fb;
    outline:1.500px solid #3d98ea;
    outline-offset:-2px;
}
.tool.off{color:#9a9a9a;}
.tool.tight{gap:1px;}
.m1{margin-left:1px;}
.m2{margin-left:2px;}
.m3{margin-left:3px;}
.m4{margin-left:4px;}
.m5{margin-left:5px;}
.m6{margin-left:6px;}
.caret{
    width:0;
    height:0;
    flex:none;
    border-left:3px solid transparent;
    border-right:3px solid transparent;
    border-top:3px solid #111;
}
.caret.gray{border-top-color:#888;margin-left:1px;}
.caret.e6{margin-left:7px;}
.caret.up{border-top:0;border-bottom:3px solid #888;}
.sep{
    width:1px;
    height:17px;
    flex:none;
    margin:0 3px;
    background:#c4c4c4;
}
.sep.w8{margin:0 5px 0 6px;}
.sep.w7{margin:0 2px 0 4px;}
.sep.wide-left{margin:0 6px 0 8px;}
.grip{
    width:3px;
    height:16px;
    flex:none;
    background:repeating-linear-gradient(#b4b4b4 0 2px,transparent 2px 4px);
}
.combo{
    height:24px;
    display:flex;
    align-items:center;
    padding-left:2px;
    background:#fff;
    box-sizing:border-box;
    flex:none;
}
.combo b{
    margin-left:auto;
    width:12px;
    height:24px;
    display:flex;
    align-items:center;
    justify-content:center;
    background:#f4f4f4;
}
.w58{width:58px;}
.w70{width:70px;}

/* top bar */
.topbar{
    height:30px;
    display:flex;
    align-items:center;
    background:linear-gradient(#f8f8f8,#eeeeee);
    padding-bottom:4px;
    box-sizing:border-box;
}
.first{margin-left:-4px;}
.chev{font:700 10px "Liberation Sans",sans-serif;letter-spacing:-1px;margin:-8px 0 0 28px;width:10px;}
.gripm{margin:0 0 0 4px;}
.sum{width:13px;}
.gripw{margin:0 1px 0 6px;}
.view{width:50px;gap:3px;margin-left:2px;height:22px;padding-left:3px;}

/* main columns */
.main{
    display:flex;
    height:742px;
}
.nav{
    width:154px;
    flex:none;
    display:flex;
    flex-direction:column;
}
.pane-title{
    height:13px;
    display:flex;
    align-items:center;
    font-size:13px;
    color:#222;
    flex:none;
    background:#f0f0f0;
    border:1px solid #8b8b8b;
    box-sizing:content-box;
}
.pane-title span{flex:1;white-space:nowrap;}
.pane-title.active{
    background:#0b5fd8;
    color:#fff;
    border:0;
    height:15px;
}
.pin{width:10px;height:12px;margin-right:8px;}
.closex{width:10px;height:10px;margin-right:5px;color:#333;}
.active .closex{color:#fff;}
.nav-btn{
    height:20px;
    margin:1px 2px 1px 0;
    flex:none;
    display:flex;
    align-items:center;
    justify-content:center;
    font-size:13px;
    background:#efefef;
    border-top:1px solid #fafafa;
    border-bottom:1px solid #9d9d9d;
    border-right:1px solid #c8c8c8;
}
.nav-tools{
    height:25px;
    flex:none;
    display:flex;
    align-items:center;
    gap:4px;
    background:#f7f7f7;
    margin-right:2px;
}
.tree{
    height:623px;
    flex:none;
    padding-top:1px;
    box-sizing:border-box;
    background:#fff;
    border:solid #8a8a8a;
    border-width:1px 1px 1px 0;
    margin-right:2px;
    overflow:hidden;
}
.folder{
    height:16px;
    display:flex;
    align-items:center;
    white-space:nowrap;
}
.exp{
    width:0;
    height:0;
    margin:0 8px 0 2px;
    flex:none;
    border:4px solid transparent;
    border-left:5px solid #bbb;
    border-right:0;
}
.exp.open{
    width:6px;
    height:6px;
    margin:0 8px 0 1px;
    border:0;
    background:linear-gradient(135deg,transparent 50%,#333 50%);
}
.fold{width:16px;height:14px;margin-right:4px;flex:none;}
.cad-name{font-size:12px;}
.cad-ico{width:15px;height:15px;margin-left:5px;flex:none;}
.newtag{
    font:700 8px/8px "Liberation Sans",sans-serif;
    background:#ffe200;
    margin:-8px 0 0 1px;
    padding:0 1px;
}
.kid{
    height:16px;
    display:flex;
    align-items:center;
    margin-left:3px;
    border-left:1px dotted #6a6a6a;
    white-space:nowrap;
    background:repeating-linear-gradient(#6a6a6a 0 1px,transparent 1px 2px) 19px 0/1px 100% no-repeat;
}
.kid.end{background-size:1px 8px;}
.kid em{
    font:12px "Liberation Mono",monospace;
    letter-spacing:-1.200px;
    margin-left:1px;
}
.stub{
    width:10px;
    height:8px;
    flex:none;
    align-self:flex-start;
    margin-left:19px;
    border-bottom:1px dotted #6a6a6a;
    box-sizing:border-box;
}
.ti{width:14px;height:14px;margin:0 6px 0 1px;flex:none;}
.hover{
    display:flex;
    align-items:center;
    height:15px;
    margin-left:-2px;
    padding:0 3px 0 2px;
    background:#f2f2f2;
    border:1px solid #c8c8c8;
    border-radius:2px;
}

/* component list */
.list-pane{
    width:163px;
    margin:0 1px 0 4px;
    flex:none;
    display:flex;
    flex-direction:column;
}
.list-tools{
    height:24px;
    margin-top:2px;
    display:flex;
    align-items:center;
    padding-left:4px;
    gap:4px;
    background:#f7f7f7;
    flex:none;
}
.list-tools .del{margin:0 3px 0 3px;}
.search{
    height:25px;
    flex:none;
    display:flex;
    align-items:center;
    gap:4px;
    margin-top:2px;
}
.search-box{
    width:138px;
    height:22px;
    line-height:22px;
    font-size:13px;
    padding-left:3px;
    color:#888;
    background:#fff;
    border:1px solid #b7d3ea;
    border-radius:2px;
    box-sizing:border-box;
    flex:none;
}
.list-tree{
    flex:1;
    padding-top:3px;
    background:#fff;
    border:1px solid #8a8a8a;
}
.root{
    height:16px;
    display:flex;
    align-items:center;
    font-size:13px;
    padding-left:11px;
}
.exp-blue{
    width:6px;
    height:6px;
    flex:none;
    background:linear-gradient(135deg,transparent 50%,#3fb2f0 50%);
}
.hdash{width:7px;border-bottom:1px dotted #666;margin:0 0 0 3px;}
.root .ti{margin:0 7px 0 0;}
.leaf{
    height:16px;
    display:flex;
    align-items:flex-start;
}
.leaf .stub{margin-left:30px;border-left:1px dotted #6a6a6a;}
.picked{
    width:51px;
    height:16px;
    display:flex;
    align-items:center;
    gap:6px;
    padding-left:3px;
    box-sizing:border-box;
    background:#3169c4;
    color:#fff;
}
.picked i{font:12px "Liberation Mono",monospace;letter-spacing:-1.200px;}
.gear{width:12px;height:12px;flex:none;}

/* workspace */
.work{
    width:657px;
    flex:none;
    overflow:hidden;
    display:flex;
    flex-direction:column;
}
.tb-row{
    height:27px;
    display:flex;
    justify-content:space-between;
    align-items:center;
    flex:none;
}
.tb-row.last{height:29px;}
.tb{
    height:24px;
    display:flex;
    align-items:center;
    padding-left:6px;
    background:#f8f8f8;
    border-radius:2px;
    flex:none;
}
.tb.wide{height:26px;}
.tb .grip + .combo{margin-left:3px;}
.tb .grip + .tool{margin-left:2px;}
.tb-row .tb .tool.sel{width:51px;margin-left:2px;padding-left:3px;}
.tail{width:13px;padding:0 0 0 3px;overflow:hidden;}
.red-frag{color:#d02020;margin-left:3px;font-size:12px;}
.viewport{
    width:653px;
    height:443px;
    margin-left:4px;
    flex:none;
    display:block;
}
.g-mark{font:18px "Noto Sans","Liberation Sans",sans-serif;fill:#eee;}
.v-gray{font:19px "Noto Sans","Noto Sans CJK SC",sans-serif;fill:#aeaeae;}
.v-gray.dim{fill:#858585;}
.v-green{font:21px "Noto Sans","Noto Sans CJK SC",sans-serif;fill:#0d620f;}
.v-green.num{font-size:22px;}
.v-green.sm{font-size:20px;}
.tb-stack{flex:none;height:60px;display:flex;flex-direction:column;}
.strip{height:28px;background:#f2f2f2;padding-left:0;}
.strip.second{height:32px;padding:4px 0 0 167px;box-sizing:border-box;background:#f0f0f0;}
.stub-btn{margin-left:160px;width:52px;justify-content:flex-end;}
.shrink{gap:2px;}
.plain{flex:none;white-space:nowrap;}
.close-txt{margin-left:5px;}
.xlabel{color:#888;}
.num-input{
    width:57px;
    height:22px;
    margin-left:3px;
    padding-right:3px;
    display:flex;
    align-items:center;
    justify-content:flex-end;
    gap:9px;
    color:#888;
    border:1px solid #7c7c7c;
    box-sizing:border-box;
    flex:none;
    font-size:13px;
}
.spin{display:flex;flex-direction:column;gap:6px;}
.mm{color:#666;margin-left:3px;font-size:12px;}

/* rebar grid */
.grid-wrap{
    flex:1;
    display:flex;
    overflow:hidden;
    border-top:1px solid #b0b0b0;
    background:#fff;
    border-bottom:2px solid #b5b5b5;
}
.side{
    width:3px;
    height:auto;
    margin:0 5px 0 8px;
    align-self:stretch;
    background:repeating-linear-gradient(#bbb 0 2px,transparent 2px 5px);
}
.rebar{
    width:641px;
    flex:none;
    table-layout:fixed;
    border-collapse:collapse;
    align-self:flex-start;
}
.c1{width:33px;}
.c2{width:76px;}
.c3{width:53px;}
.c4{width:37px;}
.c5{width:32px;}
.c6{width:202px;}
.c7{width:166px;}
.c8{width:42px;}
.rebar th,.rebar td{
    border:1px solid #bdbdbd;
    padding:0;
    font-weight:400;
    overflow:hidden;
    white-space:nowrap;
}
.rebar th{background:#f2f2f2;text-align:center;font:12px "Liberation Mono",monospace;}
.rebar .head{height:19px;}
.rebar .head th{font:12px "Noto Sans CJK SC",sans-serif;background:linear-gradient(#fff,#f1f1f1);}
.rebar .head .hot{background:linear-gradient(#fbdda4,#f3c369);color:#6c0a8a;}
.rebar .fill{height:34px;}
.rebar .fill td{background:#ccfdd4;padding-left:2px;}
.rebar .blank{height:19px;}
.rebar .bar{border-left:2px solid #000;font:12px "Liberation Mono",monospace;letter-spacing:-1.200px;}
.rebar .latin{font:12px "Liberation Mono",monospace;letter-spacing:-1.200px;}
.rebar .mid{text-align:center;padding-left:0;}
.grade{width:12px;height:12px;display:block;margin:0 auto;}
.rebar .shape{padding:0;}
.rebar .fill .shape{padding:0;}
.rebar .shape svg{display:block;width:200px;height:33px;}
.rebar .focus{
    outline:1px dotted #333;
    outline-offset:-2px;
}
.rebar .fill .focus{background:#b6efdf;}
.rebar .desc{font-size:12px;line-height:11px;}
.sh-line{fill:none;stroke:#000;stroke-width:2;}
.sh-line.thin{stroke-width:1.800;}
.sh-k{font:12px "Liberation Mono",monospace;letter-spacing:-1.200px;fill:#000;}
.sh-r{font:12px "Liberation Mono",monospace;letter-spacing:-1.200px;fill:#f00;}

/* floating windows */
.dialog{
    position:absolute;
    box-sizing:border-box;
    border:1px solid #8c9aa6;
    background:linear-gradient(#e6edf3,#cfdbe5);
    box-shadow:2px 2px 4px rgba(0,0,0,.35);
}
.dlg-title{
    font-size:12px;
    font-weight:400;
    color:#22313f;
    white-space:nowrap;
}
.prop{
    left:146px;
    top:245px;
    width:358px;
    height:468px;
    padding:6px 7px 0 7px;
    border-radius:4px 0 0 0;
}
.prop .dlg-title{height:20px;line-height:12px;}
.prop-grid{
    height:76px;
    display:flex;
    overflow:hidden;
    background:#fff;
    border:1px solid #9a9a9a;
    padding-left:1px;
}
.prop-grid table{
    width:322px;
    flex:none;
    table-layout:fixed;
    border-collapse:collapse;
    align-self:flex-start;
}
.prop-grid th,.prop-grid td{
    border:1px solid #c2c2c2;
    font-weight:400;
    padding:0;
    height:19px;
    overflow:hidden;
    white-space:nowrap;
}
.prop-grid .head th{height:23px;background:linear-gradient(#fff,#efefef);font-size:13px;}
.prop-grid .head .hot{background:linear-gradient(#fbdda4,#f3c369);}
.prop-grid .n{width:22px;background:#f4f4f4;font:12px "Liberation Mono",monospace;}
.prop-grid .k{width:120px;text-align:left;padding-left:20px;color:#0000e0;text-decoration:underline;box-sizing:border-box;}
.prop-grid .head .k{text-align:center;padding:0;color:#111;text-decoration:none;}
.prop-grid td{color:#888;padding-left:2px;}
.prop-grid .cur .n{background:#fcd58f;color:#5a1070;}
.prop-grid .cur .k{background:#3798ff;color:#fff;text-decoration:none;}
.prop-grid .cur td:last-child{background:#e1effd;}
.vscroll{
    flex:1;
    margin-left:1px;
    background:#f6f6f6;
    display:flex;
    flex-direction:column;
    align-items:center;
}
.vscroll .thumb{width:14px;height:36px;margin-bottom:14px;background:#eee;border:1px solid #bbb;box-sizing:border-box;}
.cad{
    display:block;
    width:341px;
    height:352px;
    margin:3px 0 0 1px;
}
.c-w{font:14px "Noto Sans CJK SC",sans-serif;fill:#fff;}
.c-g{font:14px "Noto Sans CJK SC",sans-serif;fill:#10f010;}
.c-c{font:14px "Noto Sans CJK SC",sans-serif;fill:#00ffff;}
.mono{font:12px "Liberation Mono",monospace;}
.small{font:11px "Liberation Mono",monospace;fill:#0fb50f;}
.bgk{paint-order:stroke;stroke:#000;stroke-width:3px;}
.ellipse{
    position:absolute;
    left:131px;
    top:56px;
    width:100px;
    height:46px;
}
.panel{
    left:329px;
    top:117px;
    width:180px;
    height:181px;
    padding:6px 5px 0 5px;
    border-radius:6px;
}
.panel .dlg-title{height:20px;line-height:12px;}
.checks{
    height:150px;
    padding:3px 0 0 5px;
    background:#fff;
    border:1px solid #9a9a9a;
    outline:1px solid #c9c9c9;
    outline-offset:-3px;
    box-sizing:border-box;
}
.checks li{
    height:12px;
    display:flex;
    align-items:center;
    gap:3px;
    white-space:nowrap;
}
.chk{width:11px;height:11px;flex:none;}
```
